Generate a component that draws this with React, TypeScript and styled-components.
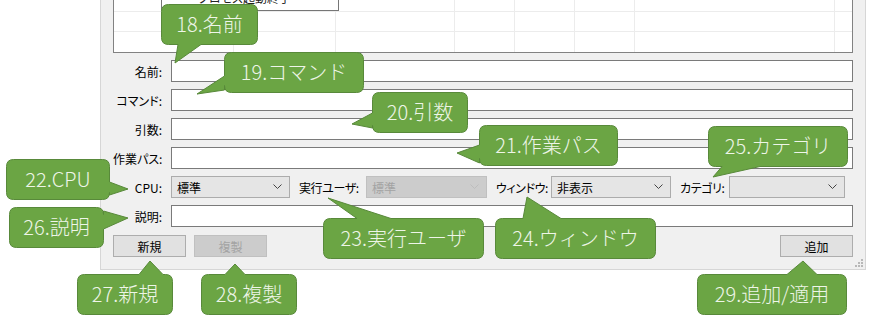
import React from 'react'
import styled, { createGlobalStyle } from 'styled-components'

const GlobalStyle = createGlobalStyle`
    body {
        margin: 0;
        background: #ffffff;
        font-family: "Noto Sans CJK JP", "Noto Sans", sans-serif;
    }
`

const Stage = styled.div`
    position: relative;
    width: 870px;
    height: 323px;
    overflow: hidden;
`

const Window = styled.div`
    position: relative;
    box-sizing: border-box;
    margin-left: 100px;
    width: 766px;
    height: 270px;
    padding: 0 12px 12px 12px;
    background: #f0f0f0;
    border: 1px solid #d6d6d6;
    border-top: none;
    display: flex;
    flex-direction: column;
    font-feature-settings: "palt";
`

/* list view, only its lower part is in view */
const ListView = styled.div`
    position: relative;
    box-sizing: border-box;
    height: 54px;
    background: #ffffff;
    border: 1px solid #828282;
    border-top: none;
    overflow: hidden;
`
const ListRow = styled.div<{ $h: number }>`
    display: grid;
    grid-template-columns: 120px 102px 119px 60px 60px 60px 200px 1fr;
    height: ${p => p.$h}px;
    border-bottom: 1px solid #ececec;
`
const ListCell = styled.div`
    border-right: 1px solid #ececec;
    &:last-child { border-right: none; }
`
const Tip = styled.div`
    position: absolute;
    left: 47px;
    top: -12px;
    box-sizing: border-box;
    width: 178px;
    height: 23px;
    background: #ffffff;
    border: 1px solid #767676;
    padding-left: 36px;
    font-size: 12px;
    line-height: 18px;
    color: #222;
`

const Form = styled.div`
    display: flex;
    flex-direction: column;
    gap: 7px;
    margin-top: 7px;
`
const Row = styled.div`
    display: flex;
    align-items: center;
    height: 22px;
`
const Label = styled.div`
    width: 58px;
    box-sizing: border-box;
    padding-right: 9px;
    text-align: right;
    font-size: 12px;
    color: #000;
    white-space: nowrap;
`
const OptLabel = styled.div<{ $w: number }>`
    width: ${p => p.$w}px;
    box-sizing: border-box;
    padding-left: 9px;
    font-size: 12px;
    letter-spacing: -0.4px;
    color: #000;
    white-space: nowrap;
`
const TextBox = styled.div`
    flex: 1;
    height: 22px;
    box-sizing: border-box;
    background: #ffffff;
    border: 1px solid #7a7a7a;
`
const Combo = styled.div<{ $w: number; $off?: boolean }>`
    width: ${p => p.$w}px;
    height: 22px;
    box-sizing: border-box;
    display: flex;
    align-items: center;
    justify-content: space-between;
    padding: 0 7px 0 5px;
    font-size: 12px;
    color: ${p => (p.$off ? '#a3a3a3' : '#000')};
    background: ${p => (p.$off ? '#cccccc' : '#e5e5e5')};
    border: 1px solid ${p => (p.$off ? '#c0c0c0' : '#acacac')};
`

const Buttons = styled.div`
    display: flex;
    gap: 8px;
    margin-top: 8px;
`
const Button = styled.div<{ $off?: boolean }>`
    width: 73px;
    height: 22px;
    box-sizing: border-box;
    display: flex;
    align-items: center;
    justify-content: center;
    font-size: 12px;
    color: ${p => (p.$off ? '#a3a3a3' : '#000')};
    background: ${p => (p.$off ? '#cccccc' : '#e1e1e1')};
    border: 1px solid ${p => (p.$off ? '#c0c0c0' : '#adadad')};
`
const Spacer = styled.div`
    flex: 1;
`
const Grip = styled.svg`
    position: absolute;
    right: 2px;
    bottom: 2px;
`

const Bubble = styled.div<{ $x: number; $y: number; $w: number; $h: number }>`
    position: absolute;
    left: ${p => p.$x}px;
    top: ${p => p.$y}px;
    width: ${p => p.$w}px;
    height: ${p => p.$h}px;
`
const BubbleShape = styled.svg`
    position: absolute;
    left: 0;
    top: 0;
    overflow: visible;
`
const BubbleText = styled.div`
    position: relative;
    height: 100%;
    display: flex;
    align-items: center;
    justify-content: center;
    font-size: 20px;
    font-weight: 300;
    color: #eef5e8;
    white-space: nowrap;
    padding-bottom: 2px;
    box-sizing: border-box;
`

type Side = 'top' | 'bottom' | 'left' | 'right'
type Tail = { side: Side; a: number; b: number; tx: number; ty: number }

function bubblePath(w: number, h: number, t: Tail) {
    const r = 7
    const L = 0.5, T = 0.5, R = w - 0.5, B = h - 0.5
    let d = `M${L + r},${T}`
    if (t.side === 'top') d += ` L${t.a},${T} L${t.tx},${t.ty} L${t.b},${T}`
    d += ` L${R - r},${T} Q${R},${T} ${R},${T + r}`
    if (t.side === 'right') d += ` L${R},${t.a} L${t.tx},${t.ty} L${R},${t.b}`
    d += ` L${R},${B - r} Q${R},${B} ${R - r},${B}`
    if (t.side === 'bottom') d += ` L${t.b},${B} L${t.tx},${t.ty} L${t.a},${B}`
    d += ` L${L + r},${B} Q${L},${B} ${L},${B - r}`
    if (t.side === 'left') d += ` L${L},${t.b} L${t.tx},${t.ty} L${L},${t.a}`
    d += ` L${L},${T + r} Q${L},${T} ${L + r},${T} Z`
    return d
}

type Note = { text: string; x: number; y: number; w: number; tail: Tail }

const notes: Note[] = [
    { text: '18.名前', x: 161, y: 4, w: 97, tail: { side: 'bottom', a: 17, b: 40, tx: 14, ty: 59 } },
    { text: '19.コマンド', x: 224, y: 52, w: 140, tail: { side: 'left', a: 24, b: 38, tx: -27, ty: 42 } },
    { text: '20.引数', x: 372, y: 92, w: 96, tail: { side: 'left', a: 21, b: 36, tx: -20, ty: 32 } },
    { text: '21.作業パス', x: 479, y: 125, w: 139, tail: { side: 'left', a: 20, b: 38, tx: -22, ty: 28 } },
    { text: '25.カテゴリ', x: 708, y: 126, w: 140, tail: { side: 'bottom', a: 14, b: 52, tx: 5, ty: 51 } },
    { text: '22.CPU', x: 6, y: 159, w: 104, tail: { side: 'right', a: 23, b: 36, tx: 122, ty: 30 } },
    { text: '26.説明', x: 9, y: 207, w: 95, tail: { side: 'right', a: 4, b: 22, tx: 119, ty: 11 } },
    { text: '23.実行ユーザ', x: 323, y: 218, w: 161, tail: { side: 'top', a: 34, b: 68, tx: 5, ty: -20 } },
    { text: '24.ウィンドウ', x: 495, y: 218, w: 161, tail: { side: 'top', a: 28, b: 66, tx: 32, ty: -21 } },
    { text: '27.新規', x: 77, y: 274, w: 96, tail: { side: 'top', a: 62, b: 86, tx: 73, ty: -13 } },
    { text: '28.複製', x: 201, y: 274, w: 96, tail: { side: 'top', a: 24, b: 44, tx: 34, ty: -10 } },
    { text: '29.追加/適用', x: 697, y: 274, w: 150, tail: { side: 'top', a: 90, b: 120, tx: 106, ty: -13 } },
]

function Callout({ note }: { note: Note }) {
    const h = 41
    return (
        <Bubble $x={note.x} $y={note.y} $w={note.w} $h={h}>
            <BubbleShape width={note.w} height={h}>
                <path d={bubblePath(note.w, h, note.tail)} fill="#6ba544" stroke="#58893a" strokeWidth={1} />
            </BubbleShape>
            <BubbleText>{note.text}</BubbleText>
        </Bubble>
    )
}

function Chevron({ off }: { off?: boolean }) {
    return (
        <svg width="9" height="6" viewBox="0 0 9 6">
            <polyline points="0.5,0.5 4.5,4.5 8.5,0.5" fill="none" stroke={off ? '#bdbdbd' : '#444'} strokeWidth={1} />
        </svg>
    )
}

function ListRows() {
    const heights = [11, 19, 20, 20]
    return (
        <>
            {heights.map((h, i) => (
                <ListRow key={i} $h={h}>
                    {Array.from({ length: 8 }).map((_, j) => <ListCell key={j} />)}
                </ListRow>
            ))}
        </>
    )
}

export default function App() {
    return (
        <Stage>
            <GlobalStyle />
            <Window>
                <ListView>
                    <ListRows />
                    <Tip>プロセス起動終了</Tip>
                </ListView>
                <Form>
                    <Row><Label>名前:</Label><TextBox /></Row>
                    <Row><Label>コマンド:</Label><TextBox /></Row>
                    <Row><Label>引数:</Label><TextBox /></Row>
                    <Row><Label>作業パス:</Label><TextBox /></Row>
                    <Row>
                        <Label>CPU:</Label>
                        <Combo $w={119}><span>標準</span><Chevron /></Combo>
                        <OptLabel $w={76}>実行ユーザ:</OptLabel>
                        <Combo $w={121} $off><span>標準</span><Chevron off /></Combo>
                        <OptLabel $w={64}>ウィンドウ:</OptLabel>
                        <Combo $w={120}><span>非表示</span><Chevron /></Combo>
                        <OptLabel $w={58}>カテゴリ:</OptLabel>
                        <Combo $w={116}><span /><Chevron /></Combo>
                    </Row>
                    <Row><Label>説明:</Label><TextBox /></Row>
                </Form>
                <Buttons>
                    <Button>新規</Button>
                    <Button $off>複製</Button>
                    <Spacer />
                    <Button>追加</Button>
                </Buttons>
                <Grip width="8" height="8" viewBox="0 0 8 8">
                    <g fill="#b8b8b8">
                        <rect x="6" y="0" width="2" height="2" />
                        <rect x="3" y="3" width="2" height="2" />
                        <rect x="6" y="3" width="2" height="2" />
                        <rect x="0" y="6" width="2" height="2" />
                        <rect x="3" y="6" width="2" height="2" />
                        <rect x="6" y="6" width="2" height="2" />
                    </g>
                </Grip>
            </Window>
            {notes.map(n => <Callout key={n.text} note={n} />)}
        </Stage>
    )
}
